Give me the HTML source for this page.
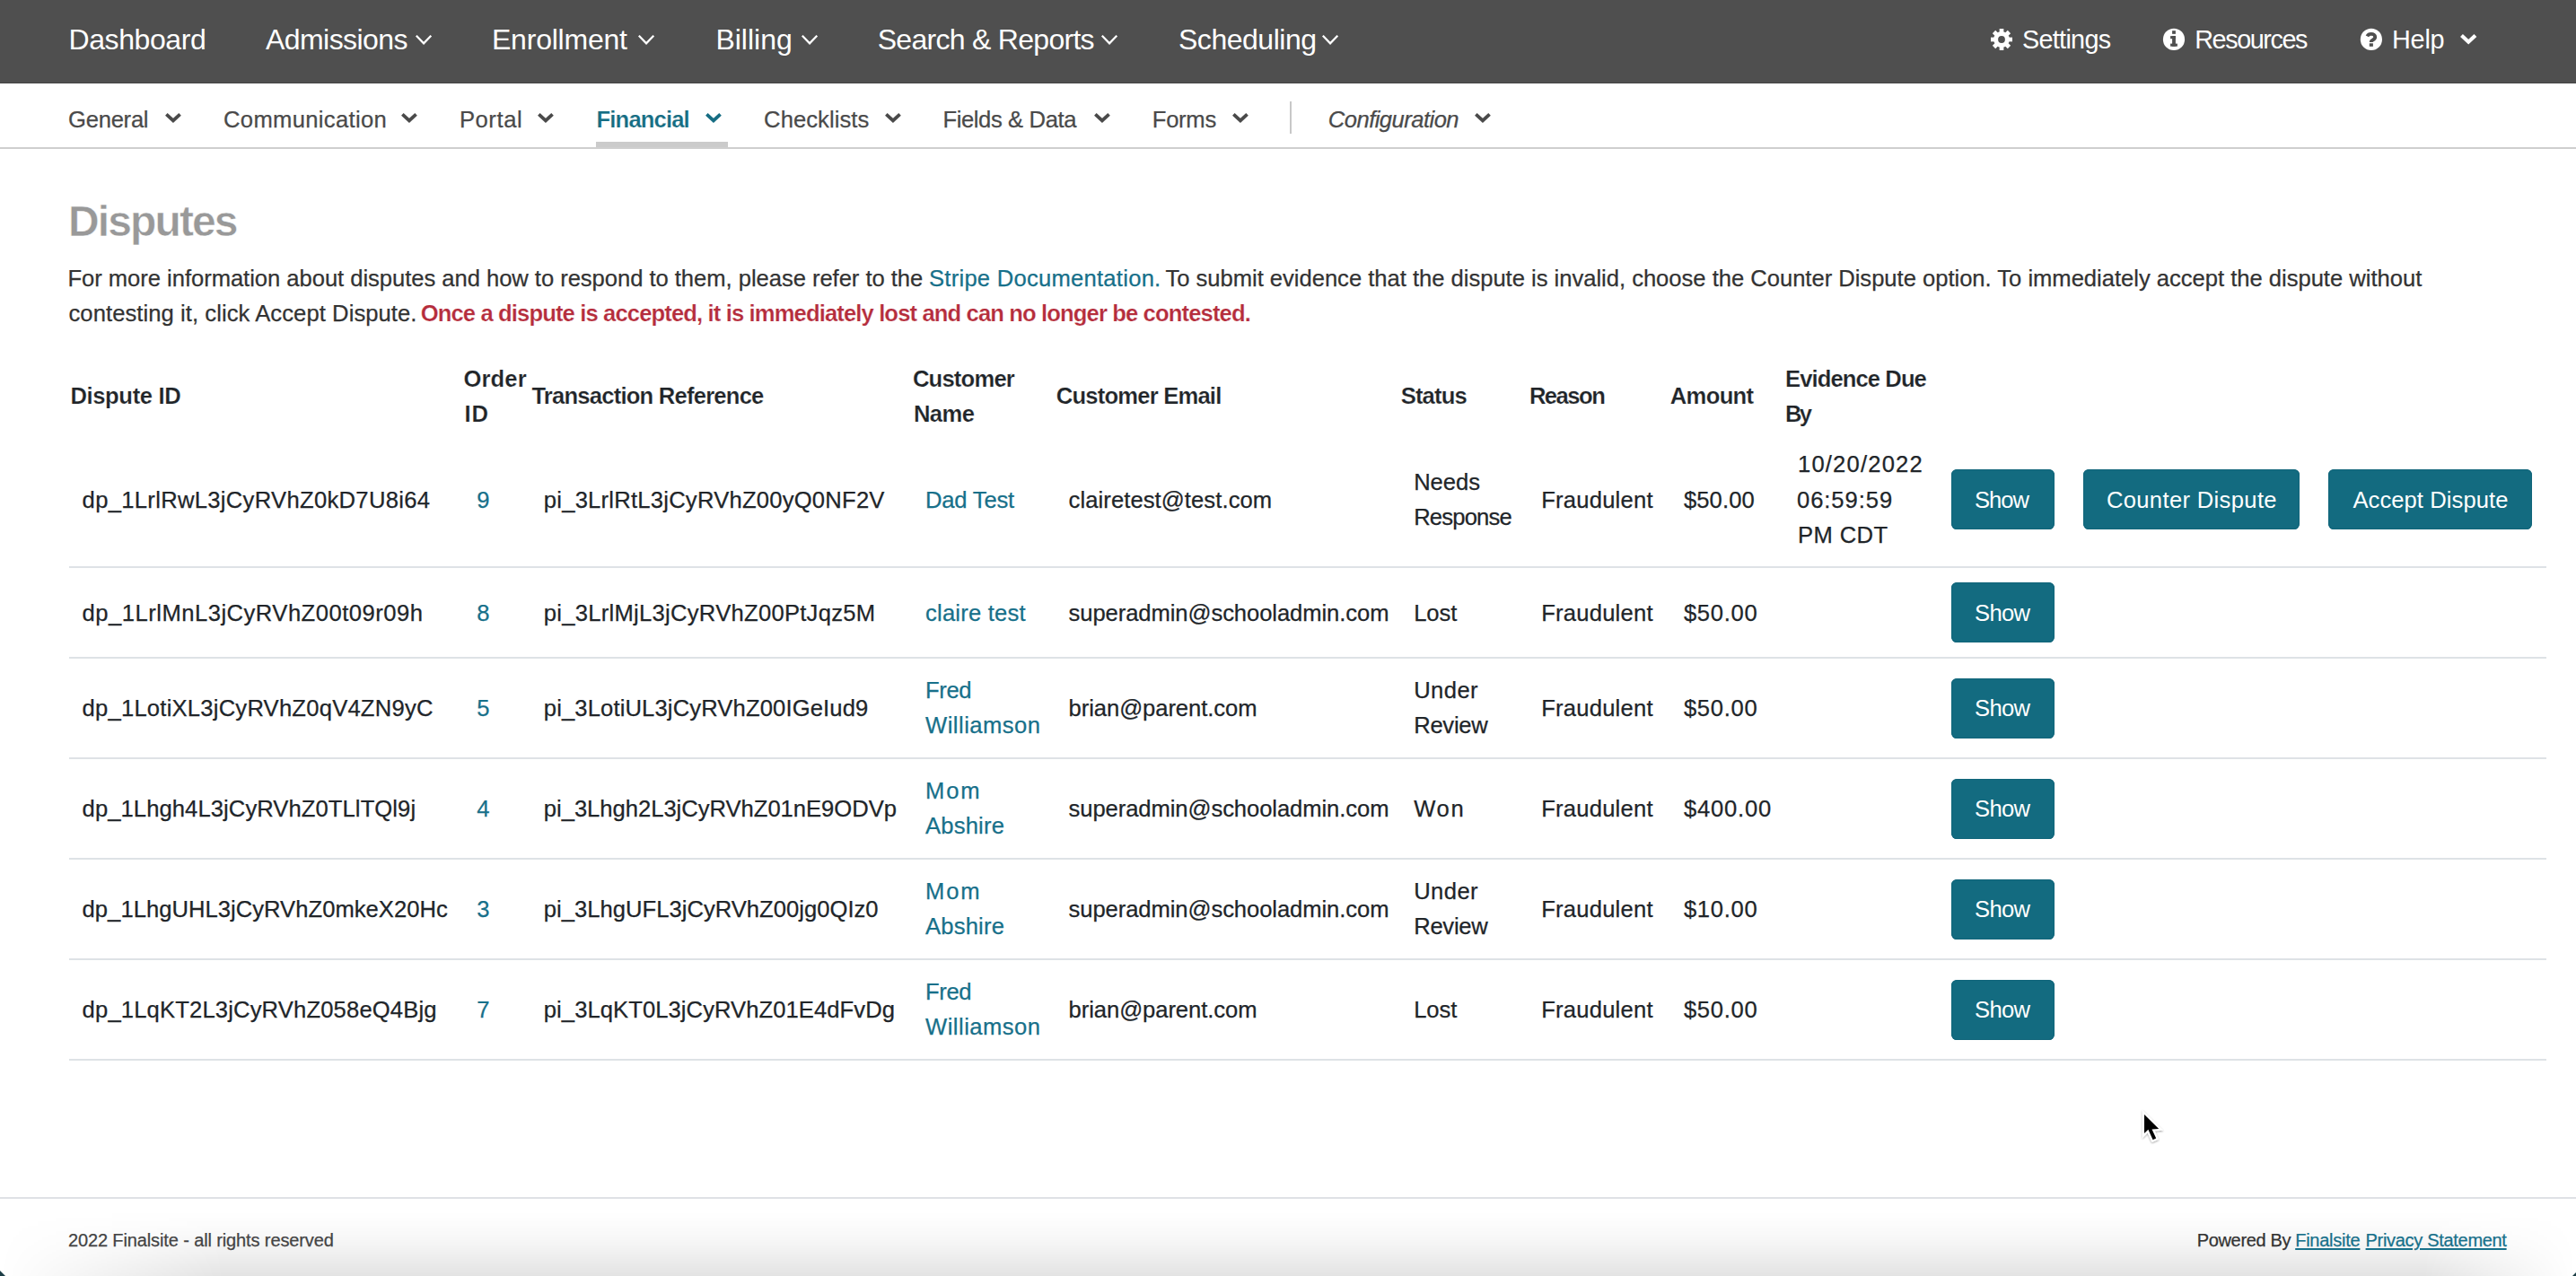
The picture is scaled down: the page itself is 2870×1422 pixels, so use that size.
<!DOCTYPE html>
<html><head><meta charset="utf-8"><title>Disputes</title>
<style>
html,body{margin:0;padding:0}
body{width:2870px;height:1422px;overflow:hidden;position:relative;background:#fff;font-family:"Liberation Sans",sans-serif;color:#212529}
.a{position:absolute;white-space:nowrap}
svg{position:absolute;overflow:visible}
.ln{position:absolute;left:76.8px;width:2760px;height:2px;background:#dee2e6}
.btn{position:absolute;background:#136b80;border-radius:6.4px;height:67px;box-shadow:inset 0 0 0 1px #11657a}
</style></head><body>
<div class="a" style="left:0;top:0;width:2870px;height:92px;background:#4f4f4f;border-bottom:1px solid #434343"></div>
<svg style="left:462.7px;top:38.9px" width="18.1" height="11" viewBox="0 0 18.1 11"><polyline points="0.81,0.81 9.05,9.37 17.29,0.81" fill="none" stroke="#fff" stroke-width="2.3" stroke-linecap="butt" stroke-linejoin="miter"/></svg>
<svg style="left:711px;top:38.9px" width="18.1" height="11" viewBox="0 0 18.1 11"><polyline points="0.81,0.81 9.05,9.37 17.29,0.81" fill="none" stroke="#fff" stroke-width="2.3" stroke-linecap="butt" stroke-linejoin="miter"/></svg>
<svg style="left:892.5px;top:38.9px" width="18.1" height="11" viewBox="0 0 18.1 11"><polyline points="0.81,0.81 9.05,9.37 17.29,0.81" fill="none" stroke="#fff" stroke-width="2.3" stroke-linecap="butt" stroke-linejoin="miter"/></svg>
<svg style="left:1227.3px;top:38.9px" width="18.1" height="11" viewBox="0 0 18.1 11"><polyline points="0.81,0.81 9.05,9.37 17.29,0.81" fill="none" stroke="#fff" stroke-width="2.3" stroke-linecap="butt" stroke-linejoin="miter"/></svg>
<svg style="left:1472.7px;top:38.9px" width="18.1" height="11" viewBox="0 0 18.1 11"><polyline points="0.81,0.81 9.05,9.37 17.29,0.81" fill="none" stroke="#fff" stroke-width="2.3" stroke-linecap="butt" stroke-linejoin="miter"/></svg>
<svg style="left:2218px;top:31.9px" width="24" height="24" viewBox="-12 -12 24 24"><g fill="#fff"><circle r="8.9"/><rect x="-2.35" y="-12" width="4.7" height="24"/><rect x="-2.35" y="-12" width="4.7" height="24" transform="rotate(45)"/><rect x="-2.35" y="-12" width="4.7" height="24" transform="rotate(90)"/><rect x="-2.35" y="-12" width="4.7" height="24" transform="rotate(135)"/></g><circle r="3.9" fill="#4f4f4f"/></svg>
<svg style="left:2404px;top:26px" width="36" height="36" viewBox="0 0 36 36"><circle cx="17.98" cy="17.93" r="12.1" fill="#fff"/><g fill="#4f4f4f"><rect x="16.1" y="8.2" width="3.8" height="3.65"/><rect x="14.1" y="14.1" width="5.8" height="3.1"/><rect x="16.1" y="14.1" width="3.8" height="11.6"/><rect x="14.1" y="22.6" width="7.8" height="3.1"/></g></svg>
<svg style="left:2624px;top:26px" width="36" height="36" viewBox="0 0 36 36"><circle cx="17.9" cy="17.93" r="12.1" fill="#fff"/><path d="M13.4 14.3 C14.3 12.6 15.9 11.9 17.8 11.9 C20.3 11.9 22.2 13.2 22.2 15.2 C22.2 17.3 20.4 18.1 19.1 18.9 C18.1 19.5 17.75 20.0 17.75 20.8 L17.75 20.9" fill="none" stroke="#4f4f4f" stroke-width="3.9" stroke-linecap="butt"/><rect x="15.8" y="22.3" width="4.1" height="3.5" fill="#4f4f4f"/></svg>
<svg style="left:2740.7px;top:37.6px" width="18.4" height="11.7" viewBox="0 0 18.4 11.7"><polyline points="1.48,1.48 9.20,8.73 16.92,1.48" fill="none" stroke="#fff" stroke-width="4.2" stroke-linecap="butt" stroke-linejoin="miter"/></svg>
<svg style="left:183.9px;top:125.8px" width="17.9" height="11.1" viewBox="0 0 17.9 11.1"><polyline points="1.34,1.34 8.95,8.41 16.56,1.34" fill="none" stroke="#4a4a4a" stroke-width="3.8" stroke-linecap="butt" stroke-linejoin="miter"/></svg>
<svg style="left:447.2px;top:125.8px" width="17.9" height="11.1" viewBox="0 0 17.9 11.1"><polyline points="1.34,1.34 8.95,8.41 16.56,1.34" fill="none" stroke="#4a4a4a" stroke-width="3.8" stroke-linecap="butt" stroke-linejoin="miter"/></svg>
<svg style="left:599.1px;top:125.8px" width="17.9" height="11.1" viewBox="0 0 17.9 11.1"><polyline points="1.34,1.34 8.95,8.41 16.56,1.34" fill="none" stroke="#4a4a4a" stroke-width="3.8" stroke-linecap="butt" stroke-linejoin="miter"/></svg>
<svg style="left:785.8px;top:125.8px" width="17.9" height="11.1" viewBox="0 0 17.9 11.1"><polyline points="1.34,1.34 8.95,8.41 16.56,1.34" fill="none" stroke="#166d83" stroke-width="3.8" stroke-linecap="butt" stroke-linejoin="miter"/></svg>
<svg style="left:985.5px;top:125.8px" width="17.9" height="11.1" viewBox="0 0 17.9 11.1"><polyline points="1.34,1.34 8.95,8.41 16.56,1.34" fill="none" stroke="#4a4a4a" stroke-width="3.8" stroke-linecap="butt" stroke-linejoin="miter"/></svg>
<svg style="left:1218.7px;top:125.8px" width="17.9" height="11.1" viewBox="0 0 17.9 11.1"><polyline points="1.34,1.34 8.95,8.41 16.56,1.34" fill="none" stroke="#4a4a4a" stroke-width="3.8" stroke-linecap="butt" stroke-linejoin="miter"/></svg>
<svg style="left:1373px;top:125.8px" width="17.9" height="11.1" viewBox="0 0 17.9 11.1"><polyline points="1.34,1.34 8.95,8.41 16.56,1.34" fill="none" stroke="#4a4a4a" stroke-width="3.8" stroke-linecap="butt" stroke-linejoin="miter"/></svg>
<svg style="left:1642.8px;top:125.8px" width="17.9" height="11.1" viewBox="0 0 17.9 11.1"><polyline points="1.34,1.34 8.95,8.41 16.56,1.34" fill="none" stroke="#4a4a4a" stroke-width="3.8" stroke-linecap="butt" stroke-linejoin="miter"/></svg>
<div class="a" style="left:1437.3px;top:113px;width:1.8px;height:36px;background:#c8c8c8"></div>
<div class="a" style="left:664.3px;top:158px;width:146.4px;height:6px;background:#cbcbcb"></div>
<div class="a" style="left:0;top:164px;width:2870px;height:2px;background:#cfcfcf"></div>
<div class="ln" style="top:631px"></div>
<div class="ln" style="top:732px"></div>
<div class="ln" style="top:844px"></div>
<div class="ln" style="top:956px"></div>
<div class="ln" style="top:1068px"></div>
<div class="ln" style="top:1180px"></div>
<div class="btn" style="left:2174px;top:523px;width:115px"></div>
<div class="btn" style="left:2321.2px;top:523px;width:240.8px"></div>
<div class="btn" style="left:2594.1px;top:523px;width:227px"></div>
<div class="btn" style="left:2174px;top:649px;width:115px"></div>
<div class="btn" style="left:2174px;top:755.5px;width:115px"></div>
<div class="btn" style="left:2174px;top:867.5px;width:115px"></div>
<div class="btn" style="left:2174px;top:979.5px;width:115px"></div>
<div class="btn" style="left:2174px;top:1091.5px;width:115px"></div>
<div class="a" style="left:0;top:1334px;width:2870px;height:2px;background:#dfe1e5"></div>
<div class="a" style="left:0;top:1350px;width:2870px;height:72px;background:linear-gradient(to bottom,rgba(0,0,0,0) 0%,rgba(0,0,0,0.015) 25%,rgba(0,0,0,0.04) 50%,rgba(0,0,0,0.075) 75%,rgba(0,0,0,0.11) 100%);-webkit-mask-image:linear-gradient(to right,transparent 0,#000 250px,#000 2700px,transparent 2870px)"></div>
<div class="a" style="left:76.5px;top:12px;font-size:32px;line-height:64px;color:#ffffff;letter-spacing:-0.41px">Dashboard</div>
<div class="a" style="left:296px;top:12px;font-size:32px;line-height:64px;color:#ffffff;letter-spacing:-0.56px">Admissions</div>
<div class="a" style="left:548px;top:12px;font-size:32px;line-height:64px;color:#ffffff;letter-spacing:-0.22px">Enrollment</div>
<div class="a" style="left:797.4px;top:12px;font-size:32px;line-height:64px;color:#ffffff">Billing</div>
<div class="a" style="left:977.7px;top:12px;font-size:32px;line-height:64px;color:#ffffff;letter-spacing:-0.71px">Search &amp; Reports</div>
<div class="a" style="left:1313px;top:12px;font-size:32px;line-height:64px;color:#ffffff;letter-spacing:-0.48px">Scheduling</div>
<div class="a" style="left:2253px;top:16px;font-size:28.8px;line-height:57.6px;color:#ffffff;letter-spacing:-0.71px">Settings</div>
<div class="a" style="left:2445.2px;top:16px;font-size:28.8px;line-height:57.6px;color:#ffffff;letter-spacing:-1.42px">Resources</div>
<div class="a" style="left:2665px;top:16px;font-size:28.8px;line-height:57.6px;color:#ffffff;letter-spacing:-0.2px">Help</div>
<div class="a" style="left:76px;top:107.6px;font-size:25.6px;line-height:51.2px;color:#4a4a4a;letter-spacing:-0.25px;-webkit-text-stroke:0.25px #4a4a4a">General</div>
<div class="a" style="left:249px;top:107.6px;font-size:25.6px;line-height:51.2px;color:#4a4a4a;letter-spacing:0.33px;-webkit-text-stroke:0.25px #4a4a4a">Communication</div>
<div class="a" style="left:511.9px;top:107.6px;font-size:25.6px;line-height:51.2px;color:#4a4a4a;letter-spacing:0.58px;-webkit-text-stroke:0.25px #4a4a4a">Portal</div>
<div class="a" style="left:664.6px;top:107.6px;font-size:25.6px;line-height:51.2px;color:#166d83;letter-spacing:-0.86px;font-weight:bold;-webkit-text-stroke:0.2px #fff">Financial</div>
<div class="a" style="left:851.1px;top:107.6px;font-size:25.6px;line-height:51.2px;color:#4a4a4a;letter-spacing:0.07px;-webkit-text-stroke:0.25px #4a4a4a">Checklists</div>
<div class="a" style="left:1050.4px;top:107.6px;font-size:25.6px;line-height:51.2px;color:#4a4a4a;letter-spacing:-0.38px;-webkit-text-stroke:0.25px #4a4a4a">Fields &amp; Data</div>
<div class="a" style="left:1283.8px;top:107.6px;font-size:25.6px;line-height:51.2px;color:#4a4a4a;letter-spacing:-0.28px;-webkit-text-stroke:0.25px #4a4a4a">Forms</div>
<div class="a" style="left:1479.8px;top:107.6px;font-size:25.6px;line-height:51.2px;color:#4a4a4a;letter-spacing:-0.54px;font-style:italic;-webkit-text-stroke:0.25px #4a4a4a">Configuration</div>
<div class="a" style="left:76.1px;top:199px;font-size:48px;line-height:96px;color:#999999;letter-spacing:-1.9px;font-weight:bold;-webkit-text-stroke:0.5px #fff">Disputes</div>
<div class="a" style="left:75.5px;top:285px;font-size:25.6px;line-height:51.2px;color:#333333;letter-spacing:-0.04px;-webkit-text-stroke:0.25px #333333">For more information about disputes and how to respond to them, please refer to the</div>
<div class="a" style="left:1035px;top:285px;font-size:25.6px;line-height:51.2px;color:#17708a;letter-spacing:0.25px;-webkit-text-stroke:0.25px #17708a">Stripe Documentation.</div>
<div class="a" style="left:1298.4px;top:285px;font-size:25.6px;line-height:51.2px;color:#333333;letter-spacing:-0.02px;-webkit-text-stroke:0.25px #333333">To submit evidence that the dispute is invalid, choose the Counter Dispute option. To immediately accept the dispute without</div>
<div class="a" style="left:76.5px;top:324px;font-size:25.6px;line-height:51.2px;color:#333333;letter-spacing:0.07px;-webkit-text-stroke:0.25px #333333">contesting it, click Accept Dispute.</div>
<div class="a" style="left:468.7px;top:324px;font-size:25.6px;line-height:51.2px;color:#b52d3c;letter-spacing:-0.87px;font-weight:bold;-webkit-text-stroke:0.2px #fff">Once a dispute is accepted, it is immediately lost and can no longer be contested.</div>
<div class="a" style="left:78.4px;top:416px;font-size:25.6px;line-height:51.2px;color:#212529;letter-spacing:-0.37px;font-weight:bold;-webkit-text-stroke:0.2px #fff">Dispute ID</div>
<div class="a" style="left:516.4px;top:397px;font-size:25.6px;line-height:51.2px;color:#212529;letter-spacing:0.15px;font-weight:bold;-webkit-text-stroke:0.2px #fff">Order</div>
<div class="a" style="left:517.4px;top:436px;font-size:25.6px;line-height:51.2px;color:#212529;letter-spacing:1.02px;font-weight:bold;-webkit-text-stroke:0.2px #fff">ID</div>
<div class="a" style="left:592.4px;top:416px;font-size:25.6px;line-height:51.2px;color:#212529;letter-spacing:-0.78px;font-weight:bold;-webkit-text-stroke:0.2px #fff">Transaction Reference</div>
<div class="a" style="left:1016.9px;top:397px;font-size:25.6px;line-height:51.2px;color:#212529;letter-spacing:-0.79px;font-weight:bold;-webkit-text-stroke:0.2px #fff">Customer</div>
<div class="a" style="left:1017.9px;top:436px;font-size:25.6px;line-height:51.2px;color:#212529;letter-spacing:-0.51px;font-weight:bold;-webkit-text-stroke:0.2px #fff">Name</div>
<div class="a" style="left:1176.8px;top:416px;font-size:25.6px;line-height:51.2px;color:#212529;letter-spacing:-0.8px;font-weight:bold;-webkit-text-stroke:0.2px #fff">Customer Email</div>
<div class="a" style="left:1560.7px;top:416px;font-size:25.6px;line-height:51.2px;color:#212529;letter-spacing:-0.84px;font-weight:bold;-webkit-text-stroke:0.2px #fff">Status</div>
<div class="a" style="left:1703.9px;top:416px;font-size:25.6px;line-height:51.2px;color:#212529;letter-spacing:-1.5px;font-weight:bold;-webkit-text-stroke:0.2px #fff">Reason</div>
<div class="a" style="left:1860.8px;top:416px;font-size:25.6px;line-height:51.2px;color:#212529;letter-spacing:-0.68px;font-weight:bold;-webkit-text-stroke:0.2px #fff">Amount</div>
<div class="a" style="left:1989px;top:397px;font-size:25.6px;line-height:51.2px;color:#212529;letter-spacing:-0.91px;font-weight:bold;-webkit-text-stroke:0.2px #fff">Evidence Due</div>
<div class="a" style="left:1989px;top:436px;font-size:25.6px;line-height:51.2px;color:#212529;letter-spacing:-2.65px;font-weight:bold;-webkit-text-stroke:0.2px #fff">By</div>
<div class="a" style="left:91.6px;top:531.6px;font-size:25.6px;line-height:51.2px;color:#212529;letter-spacing:0.31px;-webkit-text-stroke:0.25px #212529">dp_1LrlRwL3jCyRVhZ0kD7U8i64</div>
<div class="a" style="left:531.2px;top:531.6px;font-size:25.6px;line-height:51.2px;color:#17708a;-webkit-text-stroke:0.25px #17708a">9</div>
<div class="a" style="left:605.8px;top:531.6px;font-size:25.6px;line-height:51.2px;color:#212529;letter-spacing:0.23px;-webkit-text-stroke:0.25px #212529">pi_3LrlRtL3jCyRVhZ00yQ0NF2V</div>
<div class="a" style="left:1031px;top:531.6px;font-size:25.6px;line-height:51.2px;color:#17708a;letter-spacing:-0.2px;-webkit-text-stroke:0.25px #17708a">Dad Test</div>
<div class="a" style="left:1190.6px;top:531.6px;font-size:25.6px;line-height:51.2px;color:#212529;letter-spacing:0.08px;-webkit-text-stroke:0.25px #212529">clairetest@test.com</div>
<div class="a" style="left:1575.2px;top:512px;font-size:25.6px;line-height:51.2px;color:#212529;letter-spacing:-0.05px;-webkit-text-stroke:0.25px #212529">Needs</div>
<div class="a" style="left:1575.2px;top:551.2px;font-size:25.6px;line-height:51.2px;color:#212529;letter-spacing:-0.81px;-webkit-text-stroke:0.25px #212529">Response</div>
<div class="a" style="left:1717.2px;top:531.6px;font-size:25.6px;line-height:51.2px;color:#212529;letter-spacing:0.22px;-webkit-text-stroke:0.25px #212529">Fraudulent</div>
<div class="a" style="left:1875.9px;top:531.6px;font-size:25.6px;line-height:51.2px;color:#212529;letter-spacing:0.12px;-webkit-text-stroke:0.25px #212529">$50.00</div>
<div class="a" style="left:2003px;top:492.4px;font-size:25.6px;line-height:51.2px;color:#212529;letter-spacing:1.18px;-webkit-text-stroke:0.25px #212529">10/20/2022</div>
<div class="a" style="left:2002px;top:531.6px;font-size:25.6px;line-height:51.2px;color:#212529;letter-spacing:0.93px;-webkit-text-stroke:0.25px #212529">06:59:59</div>
<div class="a" style="left:2003px;top:570.8px;font-size:25.6px;line-height:51.2px;color:#212529;letter-spacing:0.4px;-webkit-text-stroke:0.25px #212529">PM CDT</div>
<div class="a" style="left:91.6px;top:658px;font-size:25.6px;line-height:51.2px;color:#212529;letter-spacing:0.49px;-webkit-text-stroke:0.25px #212529">dp_1LrlMnL3jCyRVhZ00t09r09h</div>
<div class="a" style="left:531.2px;top:658px;font-size:25.6px;line-height:51.2px;color:#17708a;-webkit-text-stroke:0.25px #17708a">8</div>
<div class="a" style="left:605.8px;top:658px;font-size:25.6px;line-height:51.2px;color:#212529;letter-spacing:0.27px;-webkit-text-stroke:0.25px #212529">pi_3LrlMjL3jCyRVhZ00PtJqz5M</div>
<div class="a" style="left:1031px;top:658px;font-size:25.6px;line-height:51.2px;color:#17708a;letter-spacing:0.21px;-webkit-text-stroke:0.25px #17708a">claire test</div>
<div class="a" style="left:1190.6px;top:658px;font-size:25.6px;line-height:51.2px;color:#212529;letter-spacing:-0.08px;-webkit-text-stroke:0.25px #212529">superadmin@schooladmin.com</div>
<div class="a" style="left:1575.2px;top:658px;font-size:25.6px;line-height:51.2px;color:#212529;letter-spacing:-0.07px;-webkit-text-stroke:0.25px #212529">Lost</div>
<div class="a" style="left:1717.2px;top:658px;font-size:25.6px;line-height:51.2px;color:#212529;letter-spacing:0.22px;-webkit-text-stroke:0.25px #212529">Fraudulent</div>
<div class="a" style="left:1875.9px;top:658px;font-size:25.6px;line-height:51.2px;color:#212529;letter-spacing:0.73px;-webkit-text-stroke:0.25px #212529">$50.00</div>
<div class="a" style="left:91.6px;top:763.7px;font-size:25.6px;line-height:51.2px;color:#212529;letter-spacing:0.22px;-webkit-text-stroke:0.25px #212529">dp_1LotiXL3jCyRVhZ0qV4ZN9yC</div>
<div class="a" style="left:531.2px;top:763.7px;font-size:25.6px;line-height:51.2px;color:#17708a;-webkit-text-stroke:0.25px #17708a">5</div>
<div class="a" style="left:605.8px;top:763.7px;font-size:25.6px;line-height:51.2px;color:#212529;letter-spacing:0.13px;-webkit-text-stroke:0.25px #212529">pi_3LotiUL3jCyRVhZ00IGeIud9</div>
<div class="a" style="left:1031px;top:744.1px;font-size:25.6px;line-height:51.2px;color:#17708a;letter-spacing:-0.35px;-webkit-text-stroke:0.25px #17708a">Fred</div>
<div class="a" style="left:1031px;top:783.3px;font-size:25.6px;line-height:51.2px;color:#17708a;letter-spacing:0.48px;-webkit-text-stroke:0.25px #17708a">Williamson</div>
<div class="a" style="left:1190.6px;top:763.7px;font-size:25.6px;line-height:51.2px;color:#212529;letter-spacing:-0.07px;-webkit-text-stroke:0.25px #212529">brian@parent.com</div>
<div class="a" style="left:1575.2px;top:744.1px;font-size:25.6px;line-height:51.2px;color:#212529;letter-spacing:0.43px;-webkit-text-stroke:0.25px #212529">Under</div>
<div class="a" style="left:1575.2px;top:783.3px;font-size:25.6px;line-height:51.2px;color:#212529;letter-spacing:-0.27px;-webkit-text-stroke:0.25px #212529">Review</div>
<div class="a" style="left:1717.2px;top:763.7px;font-size:25.6px;line-height:51.2px;color:#212529;letter-spacing:0.22px;-webkit-text-stroke:0.25px #212529">Fraudulent</div>
<div class="a" style="left:1875.9px;top:763.7px;font-size:25.6px;line-height:51.2px;color:#212529;letter-spacing:0.73px;-webkit-text-stroke:0.25px #212529">$50.00</div>
<div class="a" style="left:91.6px;top:875.7px;font-size:25.6px;line-height:51.2px;color:#212529;letter-spacing:0.08px;-webkit-text-stroke:0.25px #212529">dp_1Lhgh4L3jCyRVhZ0TLlTQl9j</div>
<div class="a" style="left:531.2px;top:875.7px;font-size:25.6px;line-height:51.2px;color:#17708a;-webkit-text-stroke:0.25px #17708a">4</div>
<div class="a" style="left:605.8px;top:875.7px;font-size:25.6px;line-height:51.2px;color:#212529;letter-spacing:-0.02px;-webkit-text-stroke:0.25px #212529">pi_3Lhgh2L3jCyRVhZ01nE9ODVp</div>
<div class="a" style="left:1031px;top:856.1px;font-size:25.6px;line-height:51.2px;color:#17708a;letter-spacing:1.85px;-webkit-text-stroke:0.25px #17708a">Mom</div>
<div class="a" style="left:1031px;top:895.3px;font-size:25.6px;line-height:51.2px;color:#17708a;letter-spacing:0.19px;-webkit-text-stroke:0.25px #17708a">Abshire</div>
<div class="a" style="left:1190.6px;top:875.7px;font-size:25.6px;line-height:51.2px;color:#212529;letter-spacing:-0.08px;-webkit-text-stroke:0.25px #212529">superadmin@schooladmin.com</div>
<div class="a" style="left:1575.2px;top:875.7px;font-size:25.6px;line-height:51.2px;color:#212529;letter-spacing:1.73px;-webkit-text-stroke:0.25px #212529">Won</div>
<div class="a" style="left:1717.2px;top:875.7px;font-size:25.6px;line-height:51.2px;color:#212529;letter-spacing:0.22px;-webkit-text-stroke:0.25px #212529">Fraudulent</div>
<div class="a" style="left:1875.9px;top:875.7px;font-size:25.6px;line-height:51.2px;color:#212529;letter-spacing:0.82px;-webkit-text-stroke:0.25px #212529">$400.00</div>
<div class="a" style="left:91.6px;top:987.7px;font-size:25.6px;line-height:51.2px;color:#212529;letter-spacing:0.03px;-webkit-text-stroke:0.25px #212529">dp_1LhgUHL3jCyRVhZ0mkeX20Hc</div>
<div class="a" style="left:531.2px;top:987.7px;font-size:25.6px;line-height:51.2px;color:#17708a;-webkit-text-stroke:0.25px #17708a">3</div>
<div class="a" style="left:605.8px;top:987.7px;font-size:25.6px;line-height:51.2px;color:#212529;letter-spacing:0.02px;-webkit-text-stroke:0.25px #212529">pi_3LhgUFL3jCyRVhZ00jg0QIz0</div>
<div class="a" style="left:1031px;top:968.1px;font-size:25.6px;line-height:51.2px;color:#17708a;letter-spacing:1.85px;-webkit-text-stroke:0.25px #17708a">Mom</div>
<div class="a" style="left:1031px;top:1007.3px;font-size:25.6px;line-height:51.2px;color:#17708a;letter-spacing:0.19px;-webkit-text-stroke:0.25px #17708a">Abshire</div>
<div class="a" style="left:1190.6px;top:987.7px;font-size:25.6px;line-height:51.2px;color:#212529;letter-spacing:-0.08px;-webkit-text-stroke:0.25px #212529">superadmin@schooladmin.com</div>
<div class="a" style="left:1575.2px;top:968.1px;font-size:25.6px;line-height:51.2px;color:#212529;letter-spacing:0.43px;-webkit-text-stroke:0.25px #212529">Under</div>
<div class="a" style="left:1575.2px;top:1007.3px;font-size:25.6px;line-height:51.2px;color:#212529;letter-spacing:-0.27px;-webkit-text-stroke:0.25px #212529">Review</div>
<div class="a" style="left:1717.2px;top:987.7px;font-size:25.6px;line-height:51.2px;color:#212529;letter-spacing:0.22px;-webkit-text-stroke:0.25px #212529">Fraudulent</div>
<div class="a" style="left:1875.9px;top:987.7px;font-size:25.6px;line-height:51.2px;color:#212529;letter-spacing:0.73px;-webkit-text-stroke:0.25px #212529">$10.00</div>
<div class="a" style="left:91.6px;top:1099.7px;font-size:25.6px;line-height:51.2px;color:#212529;letter-spacing:0.16px;-webkit-text-stroke:0.25px #212529">dp_1LqKT2L3jCyRVhZ058eQ4Bjg</div>
<div class="a" style="left:531.2px;top:1099.7px;font-size:25.6px;line-height:51.2px;color:#17708a;-webkit-text-stroke:0.25px #17708a">7</div>
<div class="a" style="left:605.8px;top:1099.7px;font-size:25.6px;line-height:51.2px;color:#212529;letter-spacing:0.07px;-webkit-text-stroke:0.25px #212529">pi_3LqKT0L3jCyRVhZ01E4dFvDg</div>
<div class="a" style="left:1031px;top:1080.1px;font-size:25.6px;line-height:51.2px;color:#17708a;letter-spacing:-0.35px;-webkit-text-stroke:0.25px #17708a">Fred</div>
<div class="a" style="left:1031px;top:1119.3px;font-size:25.6px;line-height:51.2px;color:#17708a;letter-spacing:0.48px;-webkit-text-stroke:0.25px #17708a">Williamson</div>
<div class="a" style="left:1190.6px;top:1099.7px;font-size:25.6px;line-height:51.2px;color:#212529;letter-spacing:-0.07px;-webkit-text-stroke:0.25px #212529">brian@parent.com</div>
<div class="a" style="left:1575.2px;top:1099.7px;font-size:25.6px;line-height:51.2px;color:#212529;letter-spacing:-0.07px;-webkit-text-stroke:0.25px #212529">Lost</div>
<div class="a" style="left:1717.2px;top:1099.7px;font-size:25.6px;line-height:51.2px;color:#212529;letter-spacing:0.22px;-webkit-text-stroke:0.25px #212529">Fraudulent</div>
<div class="a" style="left:1875.9px;top:1099.7px;font-size:25.6px;line-height:51.2px;color:#212529;letter-spacing:0.73px;-webkit-text-stroke:0.25px #212529">$50.00</div>
<div class="a" style="left:2200.1px;top:531.9px;font-size:25.6px;line-height:51.2px;color:#ffffff;letter-spacing:-1.07px">Show</div>
<div class="a" style="left:2346.9px;top:531.9px;font-size:25.6px;line-height:51.2px;color:#ffffff;letter-spacing:0.34px">Counter Dispute</div>
<div class="a" style="left:2621.4px;top:531.9px;font-size:25.6px;line-height:51.2px;color:#ffffff;letter-spacing:0.07px">Accept Dispute</div>
<div class="a" style="left:2200.1px;top:658.3px;font-size:25.6px;line-height:51.2px;color:#ffffff;letter-spacing:-0.67px">Show</div>
<div class="a" style="left:2200.1px;top:764px;font-size:25.6px;line-height:51.2px;color:#ffffff;letter-spacing:-0.67px">Show</div>
<div class="a" style="left:2200.1px;top:876px;font-size:25.6px;line-height:51.2px;color:#ffffff;letter-spacing:-0.67px">Show</div>
<div class="a" style="left:2200.1px;top:988px;font-size:25.6px;line-height:51.2px;color:#ffffff;letter-spacing:-0.67px">Show</div>
<div class="a" style="left:2200.1px;top:1100px;font-size:25.6px;line-height:51.2px;color:#ffffff;letter-spacing:-0.67px">Show</div>
<div class="a" style="left:75.9px;top:1361.6px;font-size:20px;line-height:40px;color:#444444;letter-spacing:-0.12px;-webkit-text-stroke:0.25px #444444">2022 Finalsite - all rights reserved</div>
<div class="a" style="left:2447.7px;top:1361.6px;font-size:20px;line-height:40px;color:#333333;letter-spacing:-0.33px;-webkit-text-stroke:0.25px #333333">Powered By</div>
<div class="a" style="left:2557.2px;top:1361.6px;font-size:20px;line-height:40px;color:#17708a;letter-spacing:-0.25px;text-decoration:underline;text-decoration-thickness:2px;text-underline-offset:2px;-webkit-text-stroke:0.25px #17708a">Finalsite</div>
<div class="a" style="left:2635.6px;top:1361.6px;font-size:20px;line-height:40px;color:#17708a;letter-spacing:-0.31px;text-decoration:underline;text-decoration-thickness:2px;text-underline-offset:2px;-webkit-text-stroke:0.25px #17708a">Privacy Statement</div>
<svg style="left:2378.8px;top:1231.7px" width="40" height="50" viewBox="0 0 40 50"><defs><filter id="sh" x="-50%" y="-50%" width="200%" height="200%"><feGaussianBlur in="SourceAlpha" stdDeviation="1.1"/><feOffset dy="1.1" result="b"/><feComponentTransfer><feFuncA type="linear" slope="0.4"/></feComponentTransfer><feMerge><feMergeNode/><feMergeNode in="SourceGraphic"/></feMerge></filter></defs><path filter="url(#sh)" d="M10 10 L10 31.1 L14.4 26.7 L19.6 38.2 L23.2 36.6 L18.5 26.4 L26.2 25.9 Z" fill="#fff" stroke="#fff" stroke-width="4.4" stroke-linejoin="miter" stroke-miterlimit="3"/><path d="M10 10 L10 31.1 L14.4 26.7 L19.6 38.2 L23.2 36.6 L18.5 26.4 L26.2 25.9 Z" fill="#000"/></svg>
<div class="a" style="left:0;top:1416px;width:6px;height:6px;background:#1b3d45;clip-path:polygon(0 0,100% 100%,0 100%)"></div>
<div class="a" style="left:2866px;top:1418px;width:4px;height:4px;background:#1b3d45;clip-path:polygon(100% 0,100% 100%,0 100%)"></div>
</body></html>
